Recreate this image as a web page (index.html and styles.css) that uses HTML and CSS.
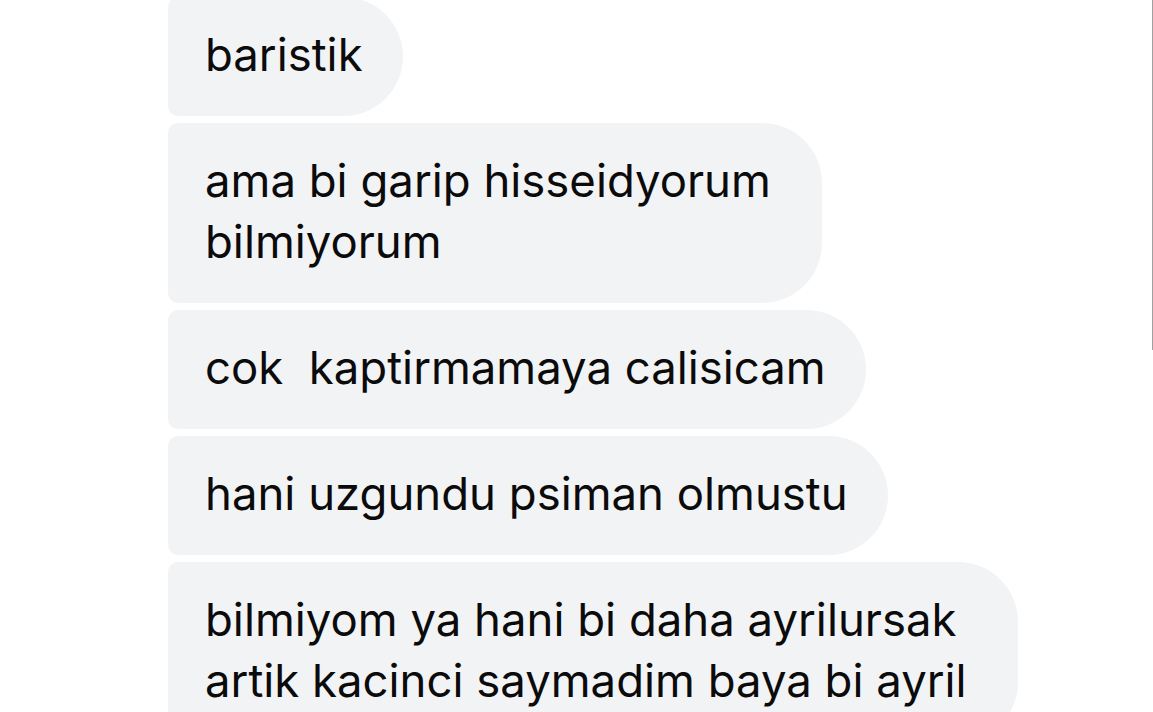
FILE: index.html
```html
<!DOCTYPE html>
<html lang="tr">
<head>
<meta charset="utf-8">
<title>Mesajlar</title>
<link rel="stylesheet" href="styles.css">
</head>
<body>
<div class="screen">
  <div class="thread">
    <div class="bubble">baristik</div>
    <div class="bubble roomy">ama bi garip hisseidyorum<br>bilmiyorum</div>
    <div class="bubble">cok&nbsp; kaptirmamaya calisicam</div>
    <div class="bubble">hani uzgundu psiman olmustu</div>
    <div class="bubble roomy">bilmiyom ya hani bi daha ayrilursak<br>artik kacinci saymadim baya bi ayril</div>
  </div>
  <div class="rail"></div>
</div>
</body>
</html>
```
FILE: styles.css
```css
html, body {
  margin: 0;
  padding: 0;
  background: #ffffff;
  overflow: hidden;
}
.screen {
  display: flex;
  width: 1153px;
  height: 712px;
  overflow: hidden;
}
.thread {
  flex: 1;
  display: flex;
  flex-direction: column;
  align-items: flex-start;
  gap: 7px;
  padding-left: 168px;
  margin-top: -3px;
}
.bubble {
  background: #f2f3f5;
  color: #0b0b0c;
  font-family: Inter, "Noto Sans", sans-serif;
  font-size: 45.5px;
  line-height: 61px;
  padding: 27px 40px 31px 37px;
  border-radius: 10px 60px 60px 10px;
  white-space: nowrap;
}
.bubble.roomy {
  padding-right: 51px;
}
.rail {
  width: 1px;
  height: 350px;
  background: #a0a0a0;
  flex: none;
}
```
